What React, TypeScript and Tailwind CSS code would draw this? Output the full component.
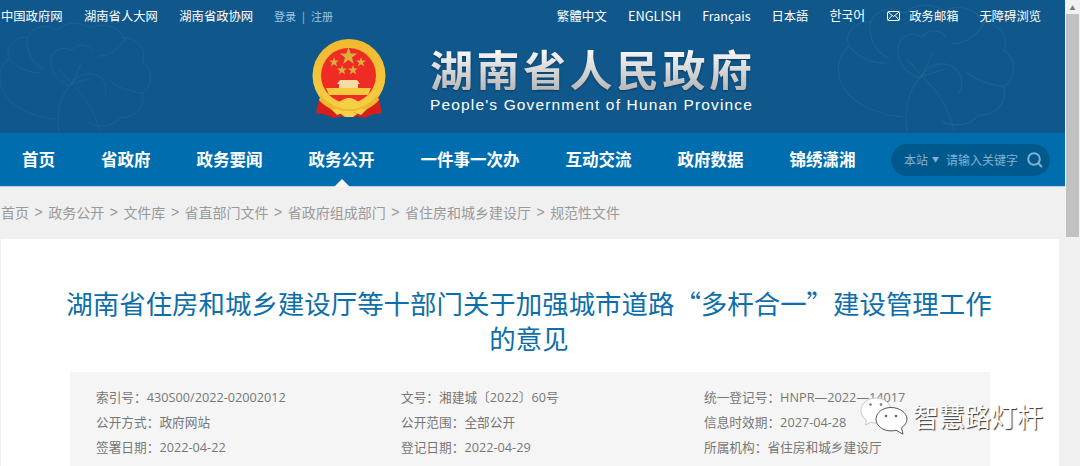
import React from "react";

const cjk = "font-['Noto_Sans_CJK_SC','Liberation_Sans',sans-serif]";

function Peony({ className }: { className: string }) {
  return (
    <svg className={className} viewBox="0 0 200 133" fill="none" stroke="#ffffff" strokeOpacity="0.055" strokeWidth="1">
      <path d="M70 118c-24-2-52-14-58-34-5-14 0-24 8-32-5-12 6-24 20-22 4-12 22-16 32-8 8-10 28-10 36-2" />
      <path d="M108 20c14-8 32-2 36 10 14 0 26 12 20 26 12 8 12 26 0 34 4 14-8 28-24 26-6 10-22 12-34 6" />
      <path d="M86 82c-12-4-24-16-20-30 2-10 14-14 22-8 4-8 18-8 22 0" />
      <path d="M86 82c6-10 16-16 28-12 10 4 14 16 8 26" />
      <path d="M88 80c-8 6-18 24-14 52M88 80c10 10 24 24 30 52M88 80l-14-16M88 80l10-22M88 80l20-6" />
      <path d="M40 30c-2 14 4 28 18 34M146 30c-6 12-18 20-30 20M20 52c8 10 20 16 34 16M164 90c-14-2-26-6-36-14" />
    </svg>
  );
}

function Emblem() {
  return (
    <svg width="76" height="80" viewBox="0 0 76 80">
      <defs>
        <linearGradient id="gold" x1="0" y1="0" x2="0" y2="1">
          <stop offset="0" stopColor="#f0b92e" />
          <stop offset="1" stopColor="#f7cf45" />
        </linearGradient>
      </defs>
      <path d="M9 56 5 74c8 1 12 2 17 5 6-2 26-2 32 0 5-3 9-4 17-5l-4-18z" fill="#d81e1a" />
      <circle cx="38" cy="36.500" r="36.500" fill="url(#gold)" />
      <circle cx="37.500" cy="36.500" r="27.500" fill="#ee2b24" />
      <path d="M37.500 4 40.200 12 48.500 12 41.800 17 44.300 25 37.500 20 30.700 25 33.200 17 26.500 12 34.800 12z" transform="translate(7.500 5) scale(.8)" fill="#dcae3c" />
      <path d="M22 20.500l1.200 3.600h3.800l-3 2.200 1.100 3.600-3.100-2.200-3.100 2.200 1.100-3.600-3-2.200h3.800z" fill="#dcae3c" transform="translate(1 -2.500)" />
      <path d="M53 20.500l1.200 3.600h3.800l-3 2.200 1.100 3.600-3.100-2.200-3.100 2.200 1.100-3.600-3-2.200h3.800z" fill="#dcae3c" transform="translate(-3 -2.500)" />
      <path d="M30.500 28l1.200 3.600h3.800l-3 2.200 1.100 3.600-3.100-2.200-3.100 2.200 1.100-3.600-3-2.200h3.800z" fill="#dcae3c" transform="translate(.5 -2)" />
      <path d="M45.500 28l1.200 3.600h3.800l-3 2.200 1.100 3.600-3.100-2.200-3.100 2.200 1.100-3.600-3-2.200h3.800z" fill="#dcae3c" transform="translate(-3.500 -2)" />
      <path d="M29 41h17l3 4h-2v4H28v-4h-2z" fill="#f8dca0" />
      <path d="M15 49h45l-3 7H18z" fill="#f7c93e" />
      <path d="M10 56c8 10 18 14 28 14s20-4 28-14l2 5c-8 9-18 13-30 13S16 70 8 61z" fill="#efb92e" />
      <path d="M26 66c4-5 8-7 12-7s8 2 12 7l-6 4H32z" fill="#f7cf45" />
      <path d="M20 70c6 0 11 1 14 3l-8 3zM56 70c-6 0-11 1-14 3l8 3zM33 72h10l3 3-4 3h-8l-4-3z" fill="#f7d24a" />
    </svg>
  );
}

function WeChat() {
  return (
    <svg width="48" height="38" viewBox="0 0 48 38">
      <path d="M16 1C7.500 1 1 6.600 1 13.500c0 4 2.200 7.400 5.600 9.700L5.500 28l5.200-2.700c1.700.5 3.400.7 5.300.7 8.500 0 15-5.600 15-12.500S24.500 1 16 1z" fill="#fff" stroke="#bbb" strokeWidth=".8" />
      <path d="M31 10.500c-8.300 0-15 5.300-15 11.700s6.700 11.700 15 11.700c1.800 0 3.500-.2 5-.7l7 4-1.500-6.400c3.300-2.200 5.500-5.200 5.500-8.600 0-6.400-7.700-11.700-16-11.700z" fill="#fff" stroke="#555" strokeWidth="1" />
      <circle cx="10.500" cy="7.500" r="1.300" fill="#777" />
      <circle cx="21" cy="7.500" r="1.300" fill="#777" />
      <circle cx="26" cy="19" r="1.300" fill="#666" />
      <circle cx="36" cy="19" r="1.300" fill="#666" />
    </svg>
  );
}

const topLeft = ["中国政府网", "湖南省人大网", "湖南省政协网"];
const nav = ["首页", "省政府", "政务要闻", "政务公开", "一件事一次办", "互动交流", "政府数据", "锦绣潇湘"];
const crumbs = ["首页", "政务公开", "文件库", "省直部门文件", "省政府组成部门", "省住房和城乡建设厅", "规范性文件"];
const info = [
  ["索引号\uFF1A430S00/2022-02002012", "公开方式\uFF1A政府网站", "签署日期\uFF1A2022-04-22"],
  ["文号\uFF1A湘建城〔2022〕60号", "公开范围\uFF1A全部公开", "登记日期\uFF1A2022-04-29"],
  ["统一登记号\uFF1AHNPR—2022—14017", "信息时效期\uFF1A2027-04-28", "所属机构\uFF1A省住房和城乡建设厅"],
];

export default function App() {
  return (
    <div lang="zh-CN" className={`relative flex h-[466px] w-[1080px] overflow-hidden bg-[#f0f0f0] ${cjk}`}>
      <div className="flex w-[1065px] flex-col">
        <header className="relative h-[133px] shrink-0 bg-[#10588c]">
          <Peony className="absolute left-[-12px] top-[10px] h-[123px] w-[190px]" />
          <Peony className="absolute left-[805px] top-[-10px] h-[143px] w-[260px]" />
          <div className="relative flex h-[32px] items-center justify-between pr-[24px] text-[12.300px] text-white">
            <div className="flex items-center">
              <div className="flex gap-[21.500px] pl-[1px]">
                {topLeft.map((t) => (
                  <span key={t}>{t}</span>
                ))}
              </div>
              <span className="ml-[21px] flex gap-[6px] text-[11px] text-[#9cc7e6]">
                <span>登录</span>
                <span>|</span>
                <span>注册</span>
              </span>
            </div>
            <div className="flex items-center">
              <span className="text-[12.500px]">繁體中文</span>
              <span className="ml-[21px] text-[12.800px]">ENGLISH</span>
              <span className="ml-[21px] text-[12.500px]">Français</span>
              <span className="ml-[21px]">日本語</span>
              <span className="ml-[21px] -translate-y-[1px] font-['Noto_Sans_CJK_KR',sans-serif] text-[13px]">한국어</span>
              <svg className="ml-[22px]" width="13" height="10" viewBox="0 0 13 10" fill="none" stroke="#fff" strokeWidth="1">
                <rect x=".5" y=".5" width="12" height="9" rx="1" />
                <path d="M1 1l5.500 4.500L12 1M1 9l4-4.500M12 9 8 4.500" />
              </svg>
              <span className="ml-[9px]">政务邮箱</span>
              <span className="ml-[21px]">无障碍浏览</span>
            </div>
          </div>
          <div className="relative flex items-start gap-[43px] pl-[311px]">
            <div className="mt-[7px] shrink-0">
              <Emblem />
            </div>
            <div className="mt-[14px] flex w-[323px] flex-col">
              <span className="whitespace-nowrap bg-gradient-to-b from-white to-[#b8b8b8] bg-clip-text text-[43px] font-bold leading-[44px] tracking-[3.500px] text-transparent drop-shadow-[0_1px_1px_rgba(0,0,0,0.35)]">
                湖南省人民政府
              </span>
              <span className="mt-[6px] whitespace-nowrap font-['Liberation_Sans',sans-serif] text-[15.500px] leading-[18px] tracking-[1.150px] text-white">
                People's Government of Hunan Province
              </span>
            </div>
          </div>
        </header>

        <nav className="relative flex h-[54px] shrink-0 items-center justify-between border-b border-[#b9cfe3] bg-[#006eae] pl-[22px] pr-[15px]">
          <div className="flex gap-[46px]">
            {nav.map((n) => (
              <span key={n} className="text-[16.500px] font-bold text-white">
                {n}
              </span>
            ))}
          </div>
          <div className="flex h-[32px] w-[159px] items-center rounded-full bg-[#00598c] pl-[13px] text-[12px] text-[#80b2d5]">
            <span>本站</span>
            <span className="ml-[4px] text-[7px]">▼</span>
            <span className="ml-[7px] whitespace-nowrap">请输入关键字</span>
            <svg className="ml-[9px] shrink-0" width="16" height="16" viewBox="0 0 16 16" fill="none" stroke="#80b2d5" strokeWidth="2">
              <circle cx="7" cy="7" r="5.800" />
              <path d="M11 11l4 4" />
            </svg>
          </div>
          <span className="absolute bottom-[-1px] left-[334px] h-0 w-0 border-x-[8px] border-b-[8px] border-x-transparent border-b-[#f6f6f6]" />
        </nav>

        <div className="flex h-[52px] shrink-0 items-center pb-[2px] pl-[1px] text-[14px] text-[#999]">
          {crumbs.map((c, i) => (
            <React.Fragment key={c}>
              {i > 0 && <span className="w-[19.200px] text-center font-['Liberation_Sans',sans-serif]">&gt;</span>}
              <span>{c}</span>
            </React.Fragment>
          ))}
        </div>

        <main className="ml-[1px] flex w-[1058px] flex-1 flex-col items-center bg-white pt-[46px]">
          <h1 className="mr-[2px] w-[960px] shrink-0 text-center text-[26.450px] font-normal leading-[35px] text-[#0e6ea9]">
            湖南省住房和城乡建设厅等十部门关于加强城市道路“多杆合一”建设管理工作
            <br />
            的意见
          </h1>
          <div className="mt-[17px] grid h-[200px] w-[920px] shrink-0 grid-cols-[305px_303px_1fr] bg-[#f5f5f5] pl-[26px] pt-[13px] font-['Open_Sans','Noto_Sans_CJK_SC',sans-serif] text-[12.700px] leading-[25px] text-[#777]">
            {info.map((col, i) => (
              <div key={i} className="flex flex-col">
                {col.map((t) => (
                  <span key={t} className="whitespace-nowrap">
                    {t}
                  </span>
                ))}
              </div>
            ))}
          </div>
        </main>
      </div>

      <aside className="flex w-[15px] flex-col bg-[#f1f1f1]">
        <div className="flex h-[14px] items-center justify-center text-[6px] text-[#777]">▲</div>
        <div className="mx-[1px] h-[223px] bg-[#c1c1c1]" />
      </aside>

      <div className="absolute left-[860px] top-[397px] flex items-center gap-[5px]">
        <WeChat />
        <span className="text-[26px] font-normal leading-[30px] text-white [text-shadow:1px_1px_1px_#333]">智慧路灯杆</span>
      </div>
    </div>
  );
}
